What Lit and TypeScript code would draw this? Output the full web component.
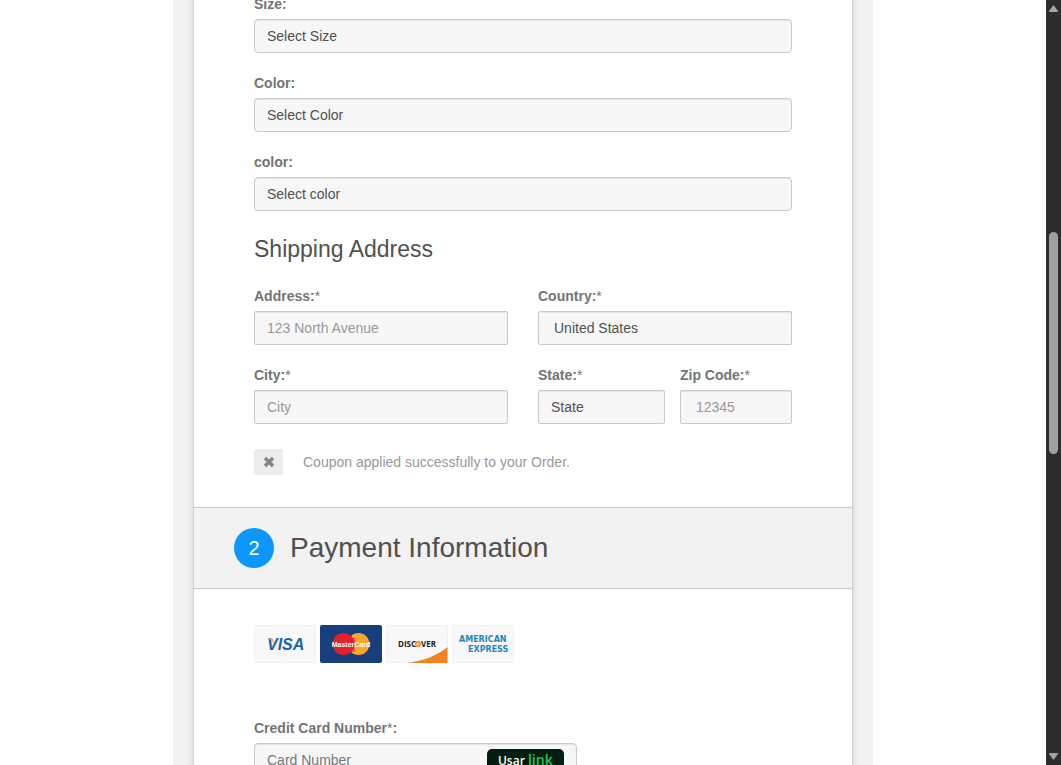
import { LitElement, html, css, svg } from "lit";
import { customElement, property } from "lit/decorators.js";

@customElement("card-logos")
class CardLogos extends LitElement {
  static styles = css`
    :host { display: flex; flex-wrap: wrap; gap: 4px; }
    svg { display: block; width: 62px; height: 38px; }
    text { font-family: "Liberation Sans", Arial, sans-serif; font-weight: 700; }
    .visa { font-size: 16px; font-style: italic; fill: #1764a9; }
    .mc { font-size: 7px; fill: #fff; }
    .disc { font-family: "Open Sans", sans-serif; font-size: 8px; font-weight: 700; fill: #222; }
    .amex { font-family: "DejaVu Sans", sans-serif; font-size: 8px; fill: #2486b8; }
  `;

  private plate() {
    return svg`<rect x="0.5" y="0.5" width="61" height="37" rx="1" fill="#f8f8f8" stroke="#f0f0f0"></rect>`;
  }

  render() {
    return html`
      <svg viewBox="0 0 62 38" role="img" aria-label="Visa">
        ${this.plate()}
        <text class="visa" x="13" y="25">VISA</text>
        <path d="M12.500 13.500h5c1 0 1.400.4 1.600 1.300l.8 4c-1.500-3-3.800-4.600-7.400-5.300z" fill="#f0a030"></path>
      </svg>
      <svg viewBox="0 0 62 38" role="img" aria-label="MasterCard">
        <rect width="62" height="38" rx="2" fill="#173f7c"></rect>
        <circle cx="38.500" cy="19" r="11" fill="#f9a72b"></circle>
        <circle cx="23.500" cy="19" r="11" fill="#e51f2d"></circle>
        <path d="M31 11a11 11 0 0 1 0 16" fill="#e51f2d"></path>
        <path d="M30 13.500h5M29 15.500h6M29 24h6M30 26h5" stroke="#e51f2d" stroke-width="1" fill="none"></path>
        <text class="mc" x="31" y="21.500" text-anchor="middle">MasterCard</text>
      </svg>
      <svg viewBox="0 0 62 38" role="img" aria-label="Discover">
        ${this.plate()}
        <path d="M21 38C38 36 52 30 61.500 22v16z" fill="#f58220"></path>
        <text class="disc" x="12" y="22">DISC</text>
        <circle cx="32" cy="19" r="2.400" fill="#fbc593" stroke="#f58220" stroke-width="1.200"></circle>
        <text class="disc" x="35" y="22">VER</text>
      </svg>
      <svg viewBox="0 0 62 38" role="img" aria-label="American Express">
        ${this.plate()}
        <text class="amex" x="7" y="17">AMERICAN</text>
        <text class="amex" x="16" y="27">EXPRESS</text>
      </svg>
    `;
  }
}

@customElement("scroll-rail")
class ScrollRail extends LitElement {
  static styles = css`
    :host { display: flex; flex-direction: column; align-items: center; width: 15px; flex: none; background: #2c2c2c; }
    svg { display: block; width: 9px; height: 7px; margin: 5px 0; fill: #a5a5a5; }
    .track { flex: 1; display: grid; grid-template-rows: 215fr 222fr 294fr; width: 9px; }
    .thumb { grid-row: 2; border-radius: 5px; background: #9f9f9f; }
  `;

  render() {
    return html`
      <svg viewBox="0 0 9 7"><path d="M4.500 0 9 6Q9 7 8 7H1Q0 7 0 6z"></path></svg>
      <div class="track"><div class="thumb"></div></div>
      <svg viewBox="0 0 9 7"><path d="M4.500 7 9 1Q9 0 8 0H1Q0 0 0 1z"></path></svg>
    `;
  }
}

@customElement("app-root")
class AppRoot extends LitElement {
  @property({ type: Array }) options = [
    { id: "size", label: "Size:", choice: "Select Size" },
    { id: "color", label: "Color:", choice: "Select Color" },
    { id: "color-alt", label: "color:", choice: "Select color" },
  ];

  static styles = css`
    :host {
      display: flex;
      height: 100vh;
      overflow: hidden;
      background: #fff;
      color: #505050;
      font: 14px/20px "Liberation Sans", Arial, sans-serif;
    }
    * { box-sizing: border-box; }
    .view { flex: 1; min-width: 0; overflow: hidden; }
    .frame { max-width: 700px; margin: 0 auto; padding: 0 20px; background: #f2f2f2; }
    .sheet { border: solid #d2d2d2; border-width: 0 1px; background: #fff; box-shadow: 0 0 8px rgba(0, 0, 0, 0.12); }
    .order { margin-top: -6px; padding: 0 60px 32px; }
    .field { margin-bottom: 20px; min-width: 0; }
    label { display: block; margin-bottom: 5px; color: #747474; font-weight: 700; }
    label span { font-weight: 400; }
    input, select {
      display: block;
      width: 100%;
      height: 34px;
      margin: 0;
      padding: 0 12px;
      border: 1px solid #cacaca;
      border-radius: 2px;
      background: #f7f7f7;
      box-shadow: inset 0 1px 1px rgba(0, 0, 0, 0.075);
      color: #505050;
      font: inherit;
      appearance: none;
    }
    .round { border-radius: 4px; }
    .inset { padding: 0 15px; }
    input::placeholder { color: #999; opacity: 1; }
    .card-input::placeholder { color: #777; }
    h3 { margin: 0 0 19px; font-size: 23px; line-height: 36px; font-weight: 400; }
    .pair { display: grid; grid-template-columns: 1fr 1fr; column-gap: 30px; }
    .region { display: grid; grid-template-columns: 17fr 15fr; column-gap: 15px; }
    .coupon { display: flex; align-items: center; gap: 20px; margin-top: 5px; color: #999; }
    .remove { display: grid; place-items: center; width: 29px; height: 26px; padding: 0; border: 0; border-radius: 2px; background: #ececec; }
    .remove svg { width: 12px; height: 12px; }
    .bar { display: flex; align-items: center; gap: 16px; padding: 20px 40px; border: solid #c8c8c8; border-width: 1px 0; background: #f2f2f2; }
    .step { display: grid; place-items: center; width: 40px; height: 40px; border-radius: 50%; background: #0a97ff; color: #fff; font-size: 20px; }
    h2 { margin: 0; font-size: 28px; line-height: 40px; font-weight: 400; }
    .payment { padding: 36px 60px 40px; }
    card-logos { margin-bottom: 55px; }
    .number { width: 60%; }
    .entry { position: relative; }
    .link { position: absolute; top: 6px; right: 13px; width: 77px; height: 22px; padding: 0; border: 0; border-radius: 5px; background: #011e0f; color: #fff; font: 600 12px/22px "Open Sans", sans-serif; }
    .link b { color: #26c952; font-size: 14px; font-weight: 600; }
  `;

  render() {
    return html`
      <main class="view">
        <div class="frame">
          <form class="sheet">
            <section class="order">
              ${this.options.map(
                (o) => html`<div class="field">
                  <label for=${o.id}>${o.label}</label>
                  <select class="round" id=${o.id}><option>${o.choice}</option></select>
                </div>`
              )}
              <h3>Shipping Address</h3>
              <div class="pair">
                <div class="field">
                  <label for="address">Address:<span>*</span></label>
                  <input id="address" placeholder="123 North Avenue" />
                </div>
                <div class="field">
                  <label for="country">Country:<span>*</span></label>
                  <select class="inset" id="country"><option>United States</option></select>
                </div>
                <div class="field">
                  <label for="city">City:<span>*</span></label>
                  <input id="city" placeholder="City" />
                </div>
                <div class="region">
                  <div class="field">
                    <label for="state">State:<span>*</span></label>
                    <select id="state"><option>State</option></select>
                  </div>
                  <div class="field">
                    <label for="zip">Zip Code:<span>*</span></label>
                    <input class="inset" id="zip" placeholder="12345" />
                  </div>
                </div>
              </div>
              <div class="coupon">
                <button class="remove" type="button" aria-label="Remove coupon">
                  <svg viewBox="0 0 12 12"><path d="M2 2l8 8M10 2l-8 8" stroke="#858585" stroke-width="3.600"></path></svg>
                </button>
                <span>Coupon applied successfully to your Order.</span>
              </div>
            </section>
            <header class="bar">
              <span class="step">2</span>
              <h2>Payment Information</h2>
            </header>
            <section class="payment">
              <card-logos></card-logos>
              <div class="number">
                <label for="card">Credit Card Number<span>*</span>:</label>
                <div class="entry">
                  <input class="round card-input" id="card" placeholder="Card Number" />
                  <button class="link" type="button">Usar <b>link</b></button>
                </div>
              </div>
            </section>
          </form>
        </div>
      </main>
      <scroll-rail></scroll-rail>
    `;
  }
}
